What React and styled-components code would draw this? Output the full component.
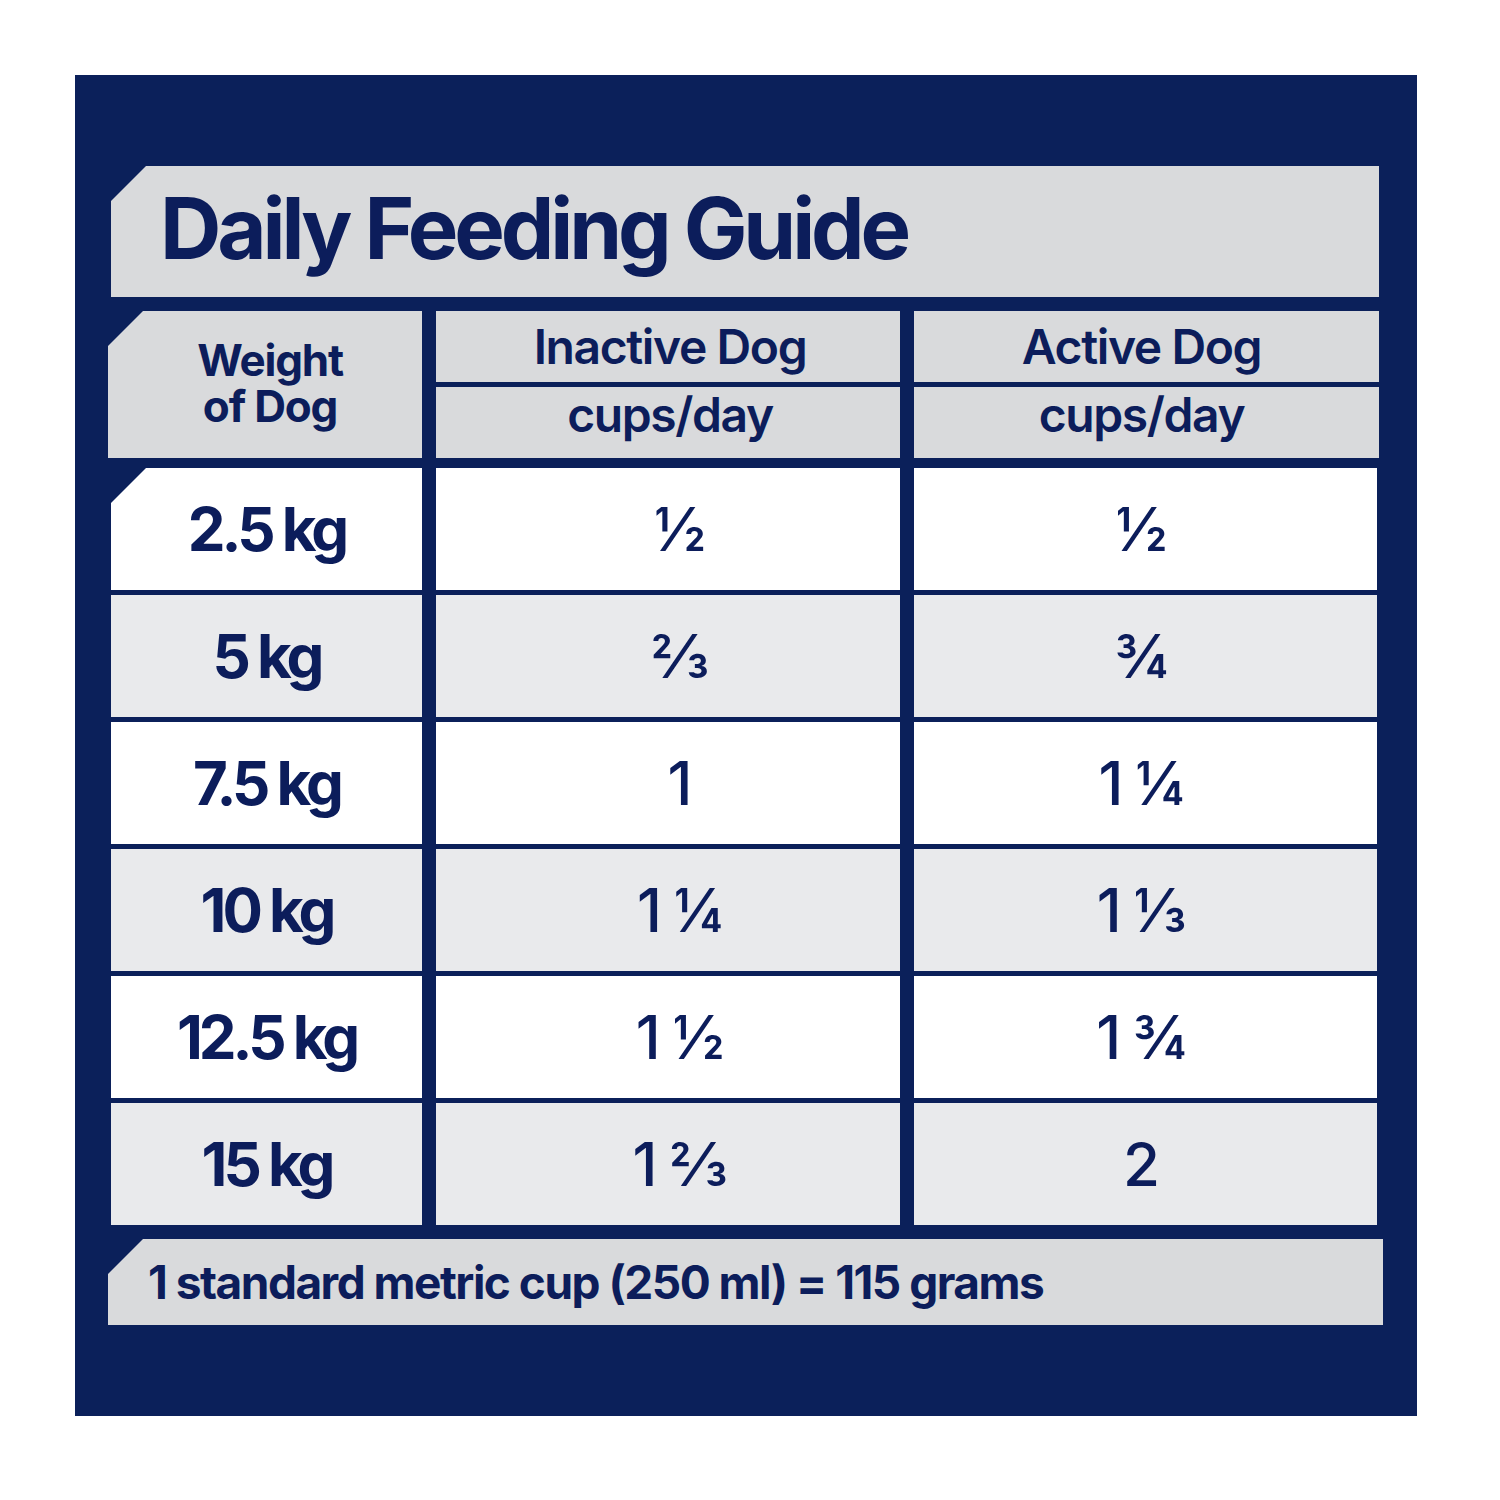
import React from "react";
import styled, { createGlobalStyle } from "styled-components";

const NAVY = "#0b205a";
const INK = "#0c1d5b";
const HEAD = "#d9dadc";
const ALT = "#e9eaec";

const Global = createGlobalStyle`
  html, body { margin: 0; padding: 0; background: #ffffff; }
  body { font-family: Inter, "Noto Sans", sans-serif; color: ${INK}; }
`;

const Page = styled.div`
  width: 1500px;
  height: 1500px;
  padding: 75px 83px 84px 75px;
  box-sizing: border-box;
`;

const Panel = styled.div`
  background: ${NAVY};
  height: 1341px;
  box-sizing: border-box;
  padding: 91px 34px 90px 33px;
  display: flex;
  flex-direction: column;
`;

const chamfer = `clip-path: polygon(35px 0, 100% 0, 100% 100%, 0 100%, 0 35px);`;

const TitleBar = styled.div`
  ${chamfer}
  background: ${HEAD};
  height: 131px;
  margin: 0 4px 0 3px;
  display: flex;
  align-items: center;
  padding: 0 0 6px 49px;
  box-sizing: border-box;
`;

const Title = styled.h1`
  margin: 0;
  font-size: 85px;
  line-height: 1;
  font-weight: 700;
  letter-spacing: -4.1px;
  color: ${INK};
`;

const HeaderGrid = styled.div`
  margin: 14px 4px 0 0;
  display: grid;
  grid-template-columns: 314px 464px 465px;
  grid-template-rows: 71px 71px;
  column-gap: 14px;
  row-gap: 5px;
`;

const HeadCell = styled.div`
  background: ${HEAD};
  display: flex;
  align-items: center;
  justify-content: center;
  box-sizing: border-box;
  font-size: 48px;
  line-height: 1;
  font-weight: 600;
  letter-spacing: -1.4px;
  padding-bottom: ${(p) => (p.$sub ? "16px" : "0")};
  padding-left: ${(p) => (p.$shift > 0 ? p.$shift : 0)}px;
  padding-right: ${(p) => (p.$shift < 0 ? -p.$shift : 0)}px;
`;

const WeightHead = styled.div`
  ${chamfer}
  grid-row: 1 / span 2;
  background: ${HEAD};
  display: flex;
  align-items: center;
  justify-content: center;
  padding: 0 0 4px 10px;
  box-sizing: border-box;
  text-align: center;
  font-size: 44px;
  line-height: 46px;
  font-weight: 700;
  letter-spacing: -1.2px;
`;

const DataGrid = styled.div`
  margin: 10px 6px 0 3px;
  display: grid;
  grid-template-columns: 311px 464px 463px;
  grid-auto-rows: 122px;
  column-gap: 14px;
  row-gap: 5px;
`;

const WeightCell = styled.div`
  ${(p) => (p.$first ? chamfer : "")}
  background: ${(p) => (p.$alt ? ALT : "#ffffff")};
  display: flex;
  align-items: center;
  justify-content: center;
  font-size: 60px;
  line-height: 1;
  font-weight: 700;
  letter-spacing: -4px;
`;

const ValueCell = styled.div`
  background: ${(p) => (p.$alt ? ALT : "#ffffff")};
  display: flex;
  align-items: center;
  justify-content: center;
  box-sizing: border-box;
  padding-left: ${(p) => (p.$shift > 0 ? p.$shift : 0)}px;
  padding-right: ${(p) => (p.$shift < 0 ? -p.$shift : 0)}px;
  font-size: 60px;
  line-height: 1;
  font-weight: 500;
  letter-spacing: -2px;
`;

const Footer = styled.div`
  ${chamfer}
  margin-top: 14px;
  background: ${HEAD};
  height: 86px;
  display: flex;
  align-items: center;
  padding-left: 40px;
  box-sizing: border-box;
  font-size: 46px;
  line-height: 1;
  font-weight: 700;
  letter-spacing: -1.5px;
`;

const rows = [
  ["2.5 kg", "½", "½"],
  ["5 kg", "⅔", "¾"],
  ["7.5 kg", "1", "1 ¼"],
  ["10 kg", "1 ¼", "1 ⅓"],
  ["12.5 kg", "1 ½", "1 ¾"],
  ["15 kg", "1 ⅔", "2"],
];

export default function App() {
  return (
    <Page>
      <Global />
      <Panel>
        <TitleBar>
          <Title>Daily Feeding Guide</Title>
        </TitleBar>
        <HeaderGrid>
          <WeightHead>
            Weight
            <br />
            of Dog
          </WeightHead>
          <HeadCell $shift={4}>Inactive Dog</HeadCell>
          <HeadCell $shift={-10}>Active Dog</HeadCell>
          <HeadCell $sub $shift={4}>cups/day</HeadCell>
          <HeadCell $sub $shift={-10}>cups/day</HeadCell>
        </HeaderGrid>
        <DataGrid>
          {rows.map((r, i) => (
            <React.Fragment key={r[0]}>
              <WeightCell $alt={i % 2 === 1} $first={i === 0}>
                {r[0]}
              </WeightCell>
              <ValueCell $alt={i % 2 === 1} $shift={22}>
                {r[1]}
              </ValueCell>
              <ValueCell $alt={i % 2 === 1} $shift={-10}>
                {r[2]}
              </ValueCell>
            </React.Fragment>
          ))}
        </DataGrid>
        <Footer>1 standard metric cup (250 ml) = 115 grams</Footer>
      </Panel>
    </Page>
  );
}
